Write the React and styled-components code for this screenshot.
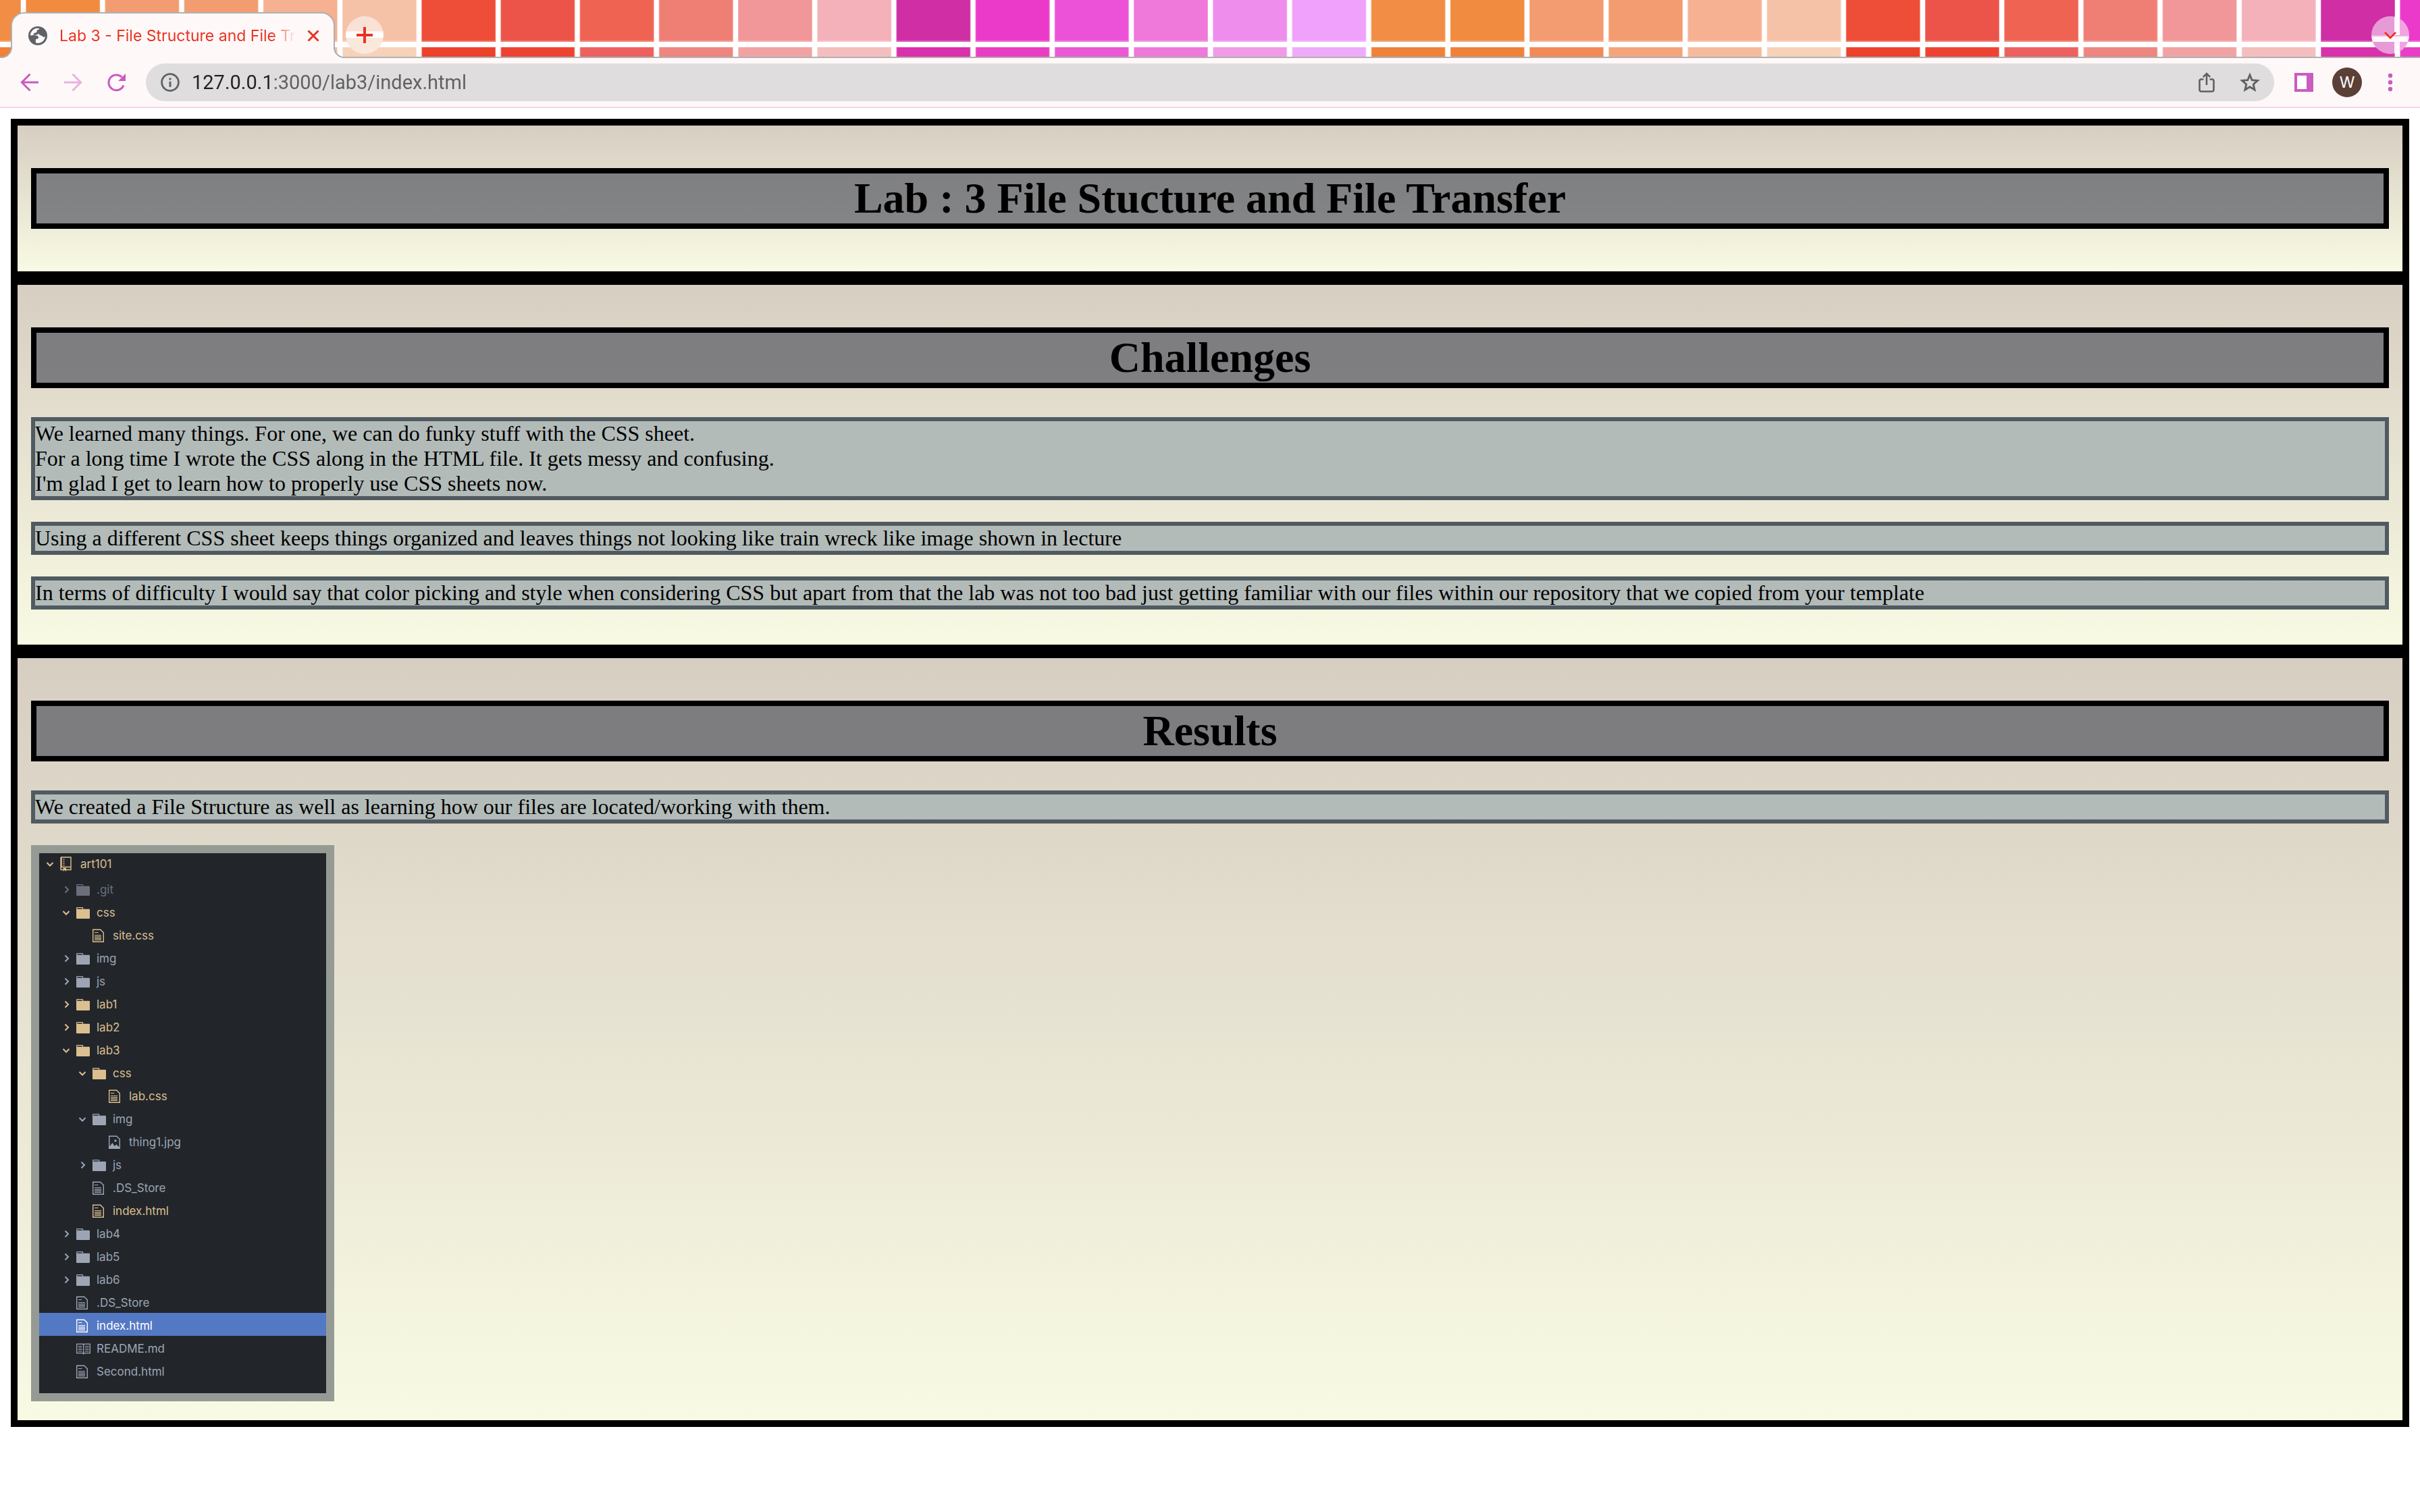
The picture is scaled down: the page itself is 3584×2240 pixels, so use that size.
import React from "react";
import styled, { createGlobalStyle, css } from "styled-components";

const accent = "#c95bc1";
const accentFaded = "#e9b1e2";
const chromeRed = "#ea3323";
const toolbarBg = "#fef9f8";
const outline = "#b0b0b0";

const GlobalStyle = createGlobalStyle`
  * { box-sizing: border-box; }
  body { margin: 0; background: #fff; }
  button, input { font: inherit; color: inherit; }
`;

/* ---------- Browser chrome ---------- */

const TabStrip = styled.header`
  position: relative;
  display: flex;
  align-items: flex-end;
  height: 86px;
  padding: 18px 16px 0;
  border-bottom: 2px solid ${outline};
  background: #fff;
  font-family: Inter, Roboto, "Liberation Sans", sans-serif;
`;

const ThemeArt = styled.svg`
  position: absolute;
  top: 0;
  left: 0;
  width: 100%;
  height: 84px;
`;

const Tab = styled.div`
  position: relative;
  display: flex;
  align-items: center;
  width: 480px;
  height: 68px;
  margin: 0 16px -2px 0;
  padding: 0 16px 0 24px;
  border: 2px solid ${outline};
  border-bottom: 0;
  border-radius: 20px 20px 0 0;
  background: ${toolbarBg};

  &::before,
  &::after {
    content: "";
    position: absolute;
    bottom: 0;
    width: 16px;
    height: 16px;
  }
  &::before {
    left: -16px;
    background: radial-gradient(circle at 0 0, transparent 14px, ${outline} 14px, ${outline} 16px, ${toolbarBg} 16px);
  }
  &::after {
    right: -16px;
    background: radial-gradient(circle at 100% 0, transparent 14px, ${outline} 14px, ${outline} 16px, ${toolbarBg} 16px);
  }
`;

const TabTitle = styled.span`
  flex: 1;
  margin: 0 12px 0 18px;
  overflow: hidden;
  white-space: nowrap;
  font-size: 23px;
  line-height: 32px;
  color: ${chromeRed};
  mask-image: linear-gradient(to right, #000 calc(100% - 36px), transparent);
`;

const PlainButton = styled.button`
  display: grid;
  place-items: center;
  padding: 0;
  border: 0;
  background: none;
  svg { display: block; }
`;

const TabClose = styled(PlainButton)`
  width: 28px;
  height: 28px;
`;

const roundLeft = css`
  background: linear-gradient(#f9e1d5 22px, #fdf3ed 22px, #fdf3ed 24px, #fff 24px, #fff 32px, #fae8dd 32px);
`;
const roundRight = css`
  margin-left: auto;
  background:
    linear-gradient(transparent 28px, #f0b3e2 28px, #f0b3e2 30px, #fff8fc 30px, #fff8fc 38px, transparent 38px),
    linear-gradient(to right, #e69bd7 34px, #fff8fc 34px, #fff8fc 42px, #f2a3e2 42px);
`;
const StripButton = styled(PlainButton)`
  position: relative;
  width: 56px;
  height: 56px;
  margin-bottom: 4px;
  border-radius: 50%;
  ${(p) => (p.$side === "right" ? roundRight : roundLeft)}
`;

const Toolbar = styled.nav`
  display: flex;
  align-items: center;
  height: 74px;
  padding: 0 12px;
  border-bottom: 2px solid #f2d5ed;
  background: ${toolbarBg};
  font-family: Inter, Roboto, "Liberation Sans", sans-serif;
`;

const ToolButton = styled(PlainButton)`
  width: 64px;
  height: 56px;
`;

const Omnibox = styled.div`
  flex: 1;
  display: flex;
  align-items: center;
  height: 56px;
  margin: 0 12px;
  padding: 0 4px 0 22px;
  border-radius: 28px;
  background: #dfdddd;
`;

const UrlInput = styled.input`
  flex: 1;
  min-width: 0;
  margin-left: 18px;
  padding: 0;
  border: 0;
  outline: 0;
  font-family: Roboto, "Liberation Sans", sans-serif;
  font-size: 29px;
  line-height: 36px;
  color: transparent;
  background: linear-gradient(to right, #202124 121px, #5f6063 121px);
  background-clip: text;
`;

const InfoButton = styled(PlainButton)`
  width: 28px;
  height: 28px;
`;

const Avatar = styled.span`
  display: grid;
  place-items: center;
  width: 44px;
  height: 44px;
  border-radius: 50%;
  background: #5b4038;
  color: #fff;
  font-size: 23px;
  line-height: 44px;
`;

/* ---------- Lab page ---------- */

const Page = styled.main`
  padding: 16px;
  font-family: "Liberation Serif", "Times New Roman", serif;
  font-size: 32px;
  line-height: 37px;
  color: #000;
`;

const Section = styled.section`
  display: flow-root;
  padding: 20px;
  border: 10px solid #000;
  background: linear-gradient(#d7cec2, #f8fae3) padding-box;
`;

const Heading = styled.h1`
  margin: 43px 0;
  border: 8px solid #000;
  background: rgba(86, 88, 98, 0.7) padding-box;
  text-align: center;
  font-size: 64px;
  font-weight: bold;
  line-height: 74px;
`;

const Paragraph = styled.p`
  margin: 32px 0;
  border: 6px solid #505b61;
  background: #b3bbb9;
`;

const Figure = styled.figure`
  width: 449px;
  margin: 32px 0 8px;
  border: 12px solid #959b94;
  background: #22262b;
`;

const Tree = styled.ul`
  margin: 0;
  padding: 0 0 17px;
  list-style: none;
  font-family: Inter, Roboto, "Liberation Sans", sans-serif;
  font-size: 17px;
  line-height: 28px;
`;

const tones = {
  plain: "#9da5b4",
  dim: "#6b6f7b",
  changed: "#dcbf91",
  active: "#ffffff",
};

const TreeRow = styled.li`
  display: grid;
  grid-template-columns: 31px 30px 1fr;
  align-items: center;
  height: 34px;
  padding: 3px 0 0 ${(p) => p.$level * 24}px;
  color: ${(p) => tones[p.$tone]};
  background: ${(p) => (p.$tone === "active" ? "#5479c4" : "none")};
  svg { display: block; }

  &:first-child {
    height: 35px;
    padding: 0 0 3px;
  }
`;

const ChevronSlot = styled.span`
  display: grid;
  place-items: center;
`;

/* ---------- Drawings ---------- */

const upperTiles = [
  "#f18d45", "#f18b40", "#f39c72", "#f39c71", "#f6b092", "#f5c2a7",
  "#ee4d38", "#ec544a", "#ef6352", "#ef7f74", "#f19799", "#f4b1ba",
  "#cf2ea5", "#eb3ac9", "#eb52d8", "#ee79da", "#ef8ded", "#f0a1fc",
];
const lowerTiles = [
  "#ef8139", "#ef8139", "#f18a57", "#f4a47b", "#f5bb9c", "#f6d2b9",
  "#ec412a", "#ee4333", "#ec6060", "#ee8580", "#f1a3a4", "#f4bebf",
  "#d931ab", "#e93ec4", "#ea58d5", "#ee79da", "#f19be6", "#efabfa",
];

function Mosaic() {
  const columns = Array.from({ length: 36 }, (_, i) => i);
  return (
    <ThemeArt aria-hidden="true">
      {columns.map((i) => {
        const x = -79 + i * 117.2;
        return (
          <g key={i}>
            <rect x={x} y="0" width="110" height="62" fill={upperTiles[i % 18]} opacity="0.75" />
            <rect x={x + 1} y="0" width="108" height="60" fill={upperTiles[i % 18]} />
            <rect x={x} y="70" width="110" height="14" fill={lowerTiles[i % 18]} opacity="0.6" />
            <rect x={x + 1} y="70" width="108" height="14" fill={lowerTiles[i % 18]} />
          </g>
        );
      })}
    </ThemeArt>
  );
}

const Stroke = ({ size = 28, width = 3, color = "currentColor", children, ...rest }) => (
  <svg width={size} height={size} viewBox={`0 0 ${size} ${size}`} fill="none" stroke={color} strokeWidth={width} aria-hidden="true" {...rest}>
    {children}
  </svg>
);

const Globe = () => (
  <svg width="28" height="28" viewBox="0 0 28 28" aria-hidden="true">
    <circle cx="14" cy="14" r="14" fill="#5f6368" />
    <path
      fill={toolbarBg}
      d="M3 13.8C3 8 7.6 3 13.6 2.8L16.4 3.6C16.2 5.4 13.2 4.6 12.7 6.4C12.4 7.8 12.9 8.6 11.6 9.2C9.6 9.8 7.9 9.6 7.6 11.4C7.6 12.8 8.8 13.3 10.2 13.2C12.2 13.2 14.4 14 15 16C15.4 18 14 18.6 12.4 18.6C10.8 18.8 11 20.4 10.8 22.4L11 24.6C17 26.4 23.8 22.6 25 15.6C23.8 15.4 23.6 16 22.2 15.8C20.2 15.4 20.6 14 18.6 13.6C16.6 13.6 16.6 11.8 15.4 11.2C13.8 10.6 14.6 12.6 12.4 12.6C9 12.8 5.6 13 3 13.8Z"
    />
  </svg>
);

const BackArrow = () => (
  <Stroke color={accent}><path d="M27 14H2.5M14.5 1.8 2.3 14l12.2 12.2" /></Stroke>
);
const ForwardArrow = () => (
  <Stroke color={accentFaded}><path d="M1 14h24.5M13.5 1.8 25.7 14 13.5 26.2" /></Stroke>
);
const Reload = () => (
  <svg width="28" height="28" viewBox="0 0 28 28" aria-hidden="true">
    <path d="M22.4 6.2A11.4 11.4 0 1 0 25 18.4" fill="none" stroke={accent} strokeWidth="3" />
    <path d="M28 1v11H17z" fill={accent} />
  </svg>
);
const Info = () => (
  <svg width="28" height="28" viewBox="0 0 28 28" fill="#5f6368" aria-hidden="true">
    <circle cx="14" cy="14" r="12.4" fill="none" stroke="#5f6368" strokeWidth="2.8" />
    <path d="M12.5 7.5h3v3h-3zM12.5 12.8h3v8h-3z" />
  </svg>
);
const Share = () => (
  <Stroke size={30} width={2.6} color="#5f6063">
    <path d="M10.500 10.500H7a2.500 2.500 0 0 0-2.500 2.500v13A2.500 2.500 0 0 0 7 28.500h16a2.500 2.500 0 0 0 2.500-2.500V13a2.500 2.500 0 0 0-2.500-2.500h-3.500M15 19V2.500M9.800 7.200 15 2l5.200 5.200" />
  </Stroke>
);
const Star = () => (
  <Stroke size={30} width={2.8} color="#5f6063">
    <path d="M15 4l3.200 7.700 8.300.7-6.300 5.500 1.900 8.100L15 21.700 7.900 26l1.900-8.100-6.300-5.500 8.300-.7z" />
  </Stroke>
);
const SidePanel = () => (
  <svg width="28" height="28" viewBox="0 0 28 28" aria-hidden="true">
    <path fill={accent} d="M0 0h28v28H0z" />
    <path fill="#fff" d="M4 4h14v20H4z" />
  </svg>
);
const Dots = () => (
  <svg width="8" height="28" viewBox="0 0 8 28" fill={accent} aria-hidden="true">
    <circle cx="4" cy="4" r="3.2" />
    <circle cx="4" cy="14" r="3.2" />
    <circle cx="4" cy="24" r="3.2" />
  </svg>
);

const Chevron = ({ open }) => (
  <Stroke size={14} width={2}>
    <path d={open ? "M2.500 5l4.500 4.500L11.500 5" : "M5.500 2.500 10 7l-4.500 4.500"} />
  </Stroke>
);

const glyphs = {
  book: (
    <svg width="20" height="24" viewBox="0 0 20 24" fill="none" stroke="currentColor" aria-hidden="true">
      <path d="M1 2h15v18.500H9M4.500 20.500H1V2M1 16.500h15" strokeWidth="1.400" />
      <path d="M2 2v14" strokeWidth="1.600" />
      <path d="M5.500 4.500v10" strokeWidth="2" strokeDasharray="1.300 1.500" />
      <path d="M4.500 17.800h4.500V23l-2.200-2-2.300 2z" fill="currentColor" stroke="none" />
    </svg>
  ),
  folder: (
    <svg width="20" height="20" viewBox="0 0 20 20" aria-hidden="true">
      <path fill="currentColor" d="M1.200 2H9.200Q10.200 2 10.200 3V4.800H19Q20 4.800 20 6V18Q20 19 19 19H1Q0 19 0 18V3.200Q0 2 1.200 2ZM1.200 3.300V4.800H9V3.300Z" fillRule="evenodd" />
    </svg>
  ),
  file: (
    <svg width="18" height="22" viewBox="0 0 18 22" fill="none" stroke="currentColor" aria-hidden="true">
      <path d="M.7 2.200h11l4.600 4.600v13.500H.7z" strokeWidth="1.400" />
      <path d="M3 6.500h5.500M3 10.500h10M3 12.800h10M3 15.100h10M3 17.400h10" strokeWidth="1.200" />
    </svg>
  ),
  image: (
    <svg width="18" height="22" viewBox="0 0 18 22" fill="none" stroke="currentColor" aria-hidden="true">
      <path d="M.7 2.200h11l4.600 4.600v13.500H.7z" strokeWidth="1.400" />
      <path d="M1 18l4.500-6 3 5 3-2.500L16 19v1.300H1z" fill="currentColor" stroke="none" />
      <path d="M8.500 7.500h3v3h-3z" fill="currentColor" stroke="none" />
    </svg>
  ),
  readme: (
    <svg width="22" height="20" viewBox="0 0 22 20" fill="none" stroke="currentColor" aria-hidden="true">
      <path d="M.7 3.200h9l1 1 1-1h8.600v13.500h-8.600l-1 1-1-1h-9zM10.700 4v14.500" strokeWidth="1.300" />
      <path d="M3 6.500h5.500M3 9h5.500M3 11.500h5.500M3 14h5.500M13 6.500h5.500M13 9h5.500M13 11.500h5.500M13 14h5.500" strokeWidth="1.200" />
    </svg>
  ),
};

/* ---------- Content ---------- */

const files = [
  { name: "art101", level: 0, kind: "book", tone: "changed", open: true },
  { name: ".git", level: 1, kind: "folder", tone: "dim", open: false },
  { name: "css", level: 1, kind: "folder", tone: "changed", open: true },
  { name: "site.css", level: 2, kind: "file", tone: "changed" },
  { name: "img", level: 1, kind: "folder", tone: "plain", open: false },
  { name: "js", level: 1, kind: "folder", tone: "plain", open: false },
  { name: "lab1", level: 1, kind: "folder", tone: "changed", open: false },
  { name: "lab2", level: 1, kind: "folder", tone: "changed", open: false },
  { name: "lab3", level: 1, kind: "folder", tone: "changed", open: true },
  { name: "css", level: 2, kind: "folder", tone: "changed", open: true },
  { name: "lab.css", level: 3, kind: "file", tone: "changed" },
  { name: "img", level: 2, kind: "folder", tone: "plain", open: true },
  { name: "thing1.jpg", level: 3, kind: "image", tone: "plain" },
  { name: "js", level: 2, kind: "folder", tone: "plain", open: false },
  { name: ".DS_Store", level: 2, kind: "file", tone: "plain" },
  { name: "index.html", level: 2, kind: "file", tone: "changed" },
  { name: "lab4", level: 1, kind: "folder", tone: "plain", open: false },
  { name: "lab5", level: 1, kind: "folder", tone: "plain", open: false },
  { name: "lab6", level: 1, kind: "folder", tone: "plain", open: false },
  { name: ".DS_Store", level: 1, kind: "file", tone: "plain" },
  { name: "index.html", level: 1, kind: "file", tone: "active" },
  { name: "README.md", level: 1, kind: "readme", tone: "plain" },
  { name: "Second.html", level: 1, kind: "file", tone: "plain" },
];

export default function App() {
  return (
    <>
      <GlobalStyle />
      <TabStrip>
        <Mosaic />
        <Tab>
          <Globe />
          <TabTitle>Lab 3 - File Structure and File Transfer</TabTitle>
          <TabClose type="button" aria-label="Close tab">
            <Stroke size={20} width={3} color={chromeRed}><path d="M2.500 2.500l15 15M17.500 2.500l-15 15" /></Stroke>
          </TabClose>
        </Tab>
        <StripButton type="button" aria-label="New tab" $side="left">
          <Stroke size={24} width={4} color={chromeRed}><path d="M12 0v24M0 12h24" /></Stroke>
        </StripButton>
        <StripButton type="button" aria-label="Search tabs" $side="right">
          <Stroke size={20} width={2.8} color={chromeRed}><path d="M2 6l8 8 8-8" /></Stroke>
        </StripButton>
      </TabStrip>

      <Toolbar>
        <ToolButton type="button" aria-label="Back"><BackArrow /></ToolButton>
        <ToolButton type="button" aria-label="Forward"><ForwardArrow /></ToolButton>
        <ToolButton type="button" aria-label="Reload"><Reload /></ToolButton>
        <Omnibox>
          <InfoButton type="button" aria-label="Site information"><Info /></InfoButton>
          <UrlInput aria-label="Address" defaultValue="127.0.0.1:3000/lab3/index.html" />
          <ToolButton type="button" aria-label="Share"><Share /></ToolButton>
          <ToolButton type="button" aria-label="Bookmark"><Star /></ToolButton>
        </Omnibox>
        <ToolButton type="button" aria-label="Side panel"><SidePanel /></ToolButton>
        <ToolButton type="button" aria-label="Profile"><Avatar>W</Avatar></ToolButton>
        <ToolButton type="button" aria-label="Menu"><Dots /></ToolButton>
      </Toolbar>

      <Page>
        <Section>
          <Heading>Lab : 3 File Stucture and File Transfer</Heading>
        </Section>
        <Section>
          <Heading>Challenges</Heading>
          <Paragraph>
            We learned many things. For one, we can do funky stuff with the CSS sheet.
            <br />
            For a long time I wrote the CSS along in the HTML file. It gets messy and confusing.
            <br />
            I'm glad I get to learn how to properly use CSS sheets now.
          </Paragraph>
          <Paragraph>
            Using a different CSS sheet keeps things organized and leaves things not looking like train wreck like
            image shown in lecture
          </Paragraph>
          <Paragraph>
            In terms of difficulty I would say that color picking and style when considering CSS but apart from that
            the lab was not too bad just getting familiar with our files within our repository that we copied from
            your template
          </Paragraph>
        </Section>
        <Section>
          <Heading>Results</Heading>
          <Paragraph>
            We created a File Structure as well as learning how our files are located/working with them.
          </Paragraph>
          <Figure>
            <Tree>
              {files.map((f, i) => (
                <TreeRow key={i} $level={f.level} $tone={f.tone}>
                  <ChevronSlot>{f.open === undefined ? null : <Chevron open={f.open} />}</ChevronSlot>
                  {glyphs[f.kind]}
                  <span>{f.name}</span>
                </TreeRow>
              ))}
            </Tree>
          </Figure>
        </Section>
      </Page>
    </>
  );
}
